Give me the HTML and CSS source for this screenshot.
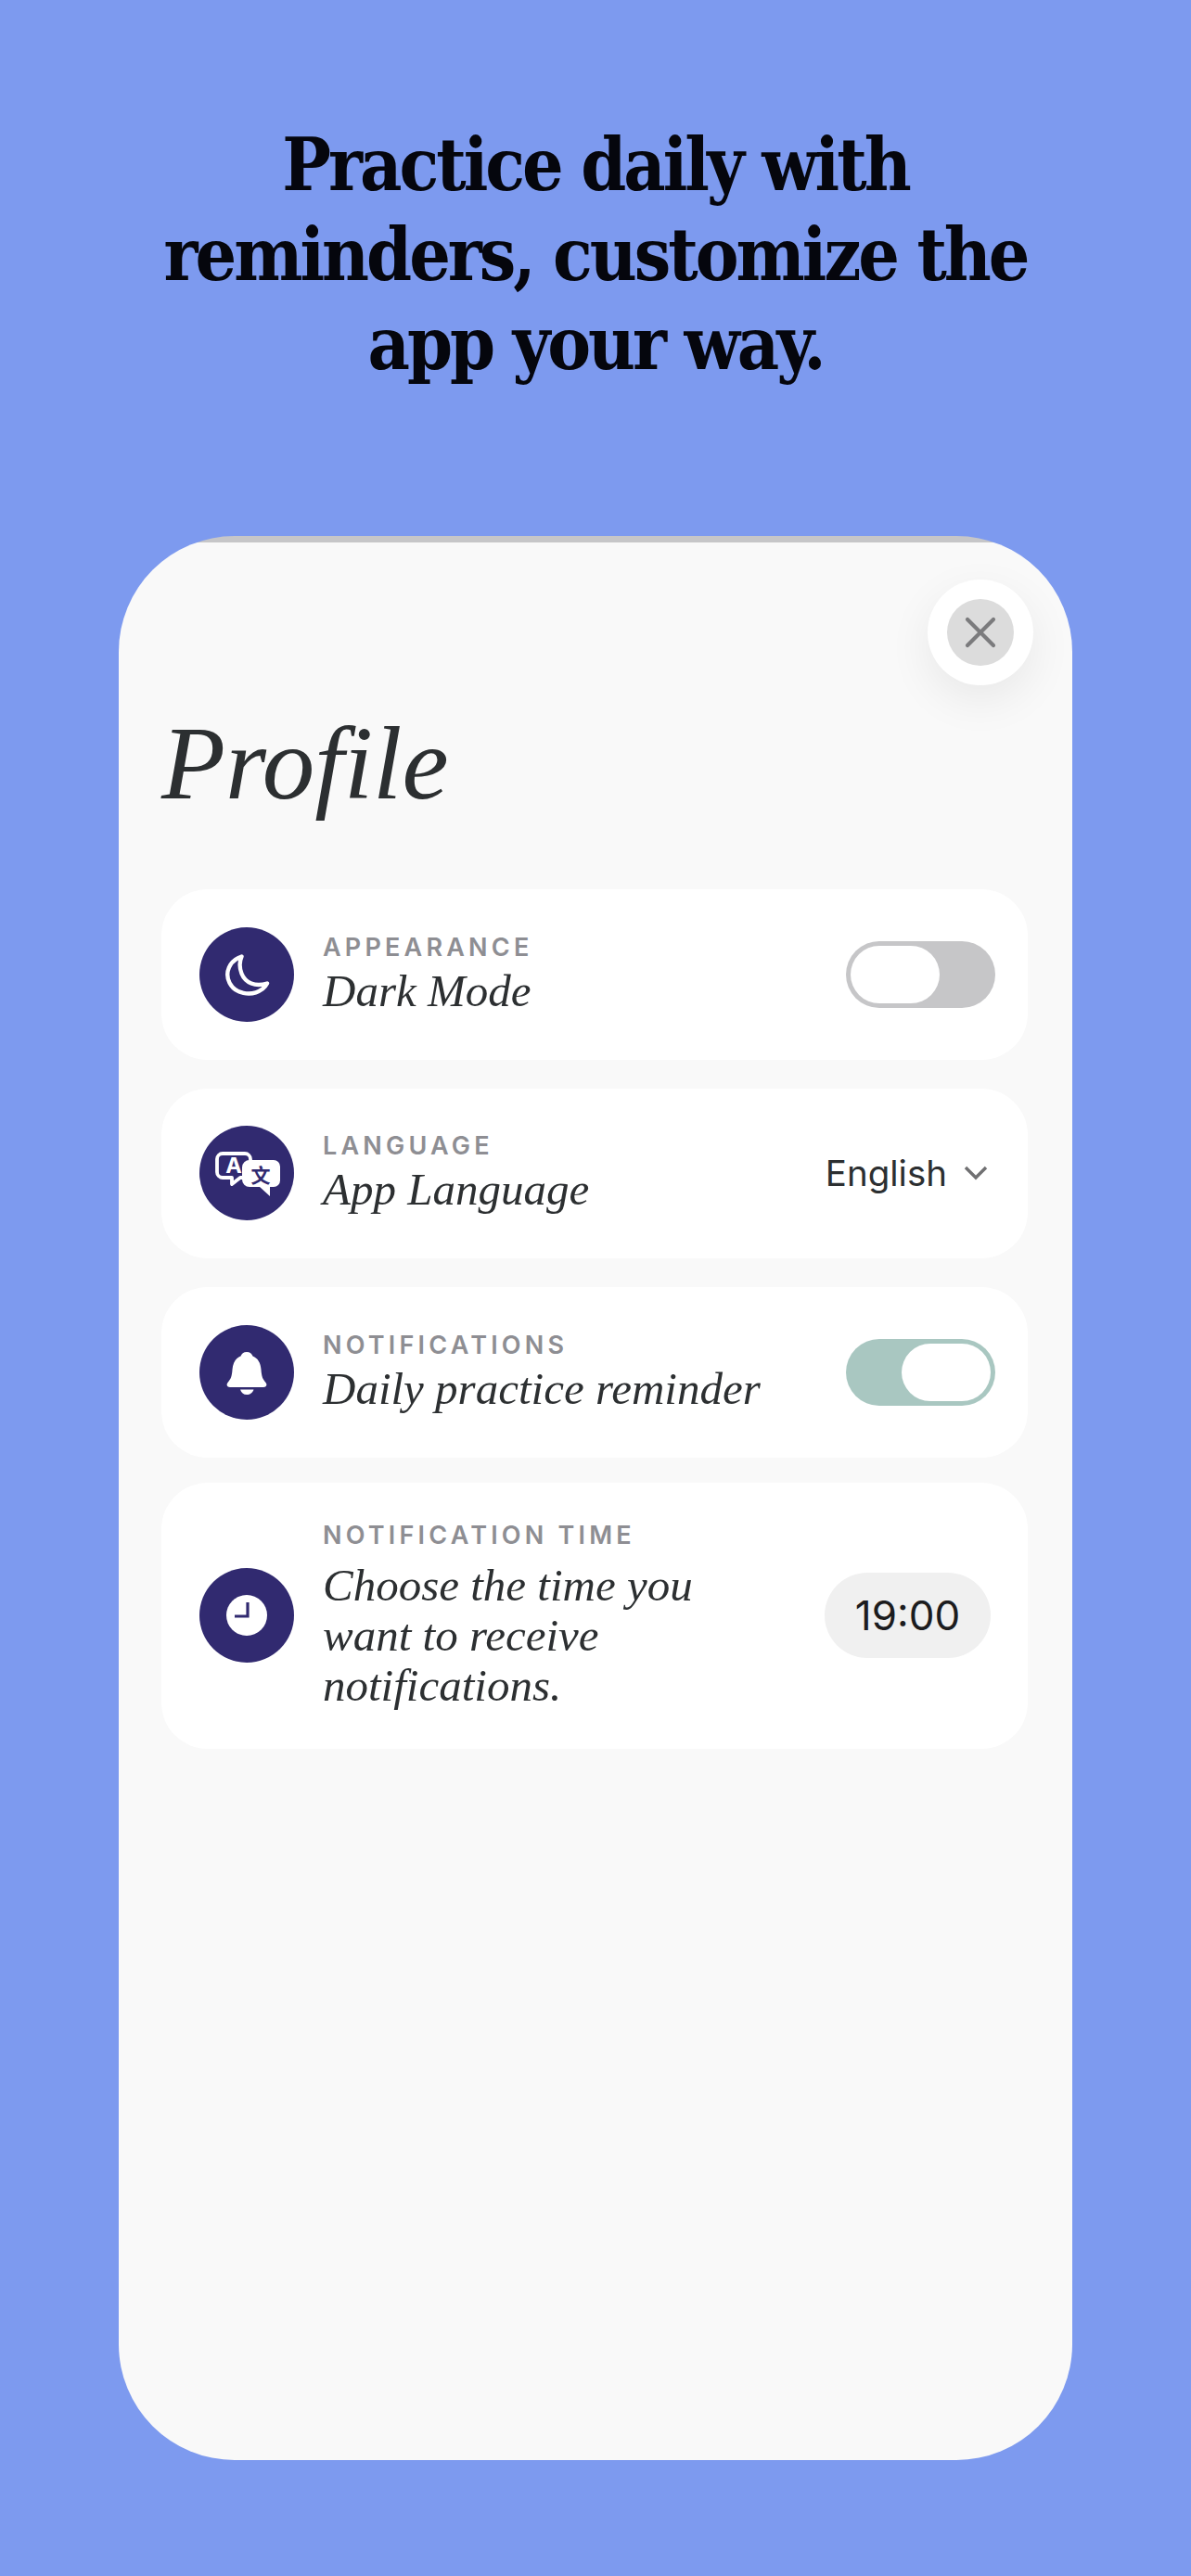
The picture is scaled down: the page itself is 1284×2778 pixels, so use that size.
FILE: index.html
```html
<!DOCTYPE html>
<html lang="en">
<head>
    <meta charset="UTF-8">
    <meta name="viewport" content="width=device-width, initial-scale=1.0">
    <title>Profile</title>
    <link rel="stylesheet" href="styles.css">
</head>
<body>
    <h1 class="headline">Practice daily with<br>reminders, customize the<br>app your way.</h1>

    <main class="sheet">
        <div class="close-row">
            <button class="close" aria-label="Close">
                <span class="close-inner">
                    <svg width="34" height="34" viewBox="0 0 34 34"><path d="M3 3 31 31M31 3 3 31" fill="none" stroke="#7b7b7d" stroke-width="4.200" stroke-linecap="round"/></svg>
                </span>
            </button>
        </div>

        <h2 class="title">Profile</h2>

        <section class="settings">
            <div class="card">
                <div class="icon">
                    <svg width="102" height="102" viewBox="0 0 102 102"><path d="M45.500 31.500C32 36 27 49 32.500 60C38 71 55 76 68 66.500C70.500 64.500 72 62.500 73 60.500C60 64.500 49.500 60 45.500 50C43 43.500 43 37 45.500 31.500Z" fill="none" stroke="#fff" stroke-width="4.400" stroke-linejoin="round"/></svg>
                </div>
                <div class="text">
                    <div class="label">APPEARANCE</div>
                    <div class="desc">Dark Mode</div>
                </div>
                <div class="toggle toggle-off"><span class="knob"></span></div>
            </div>

            <div class="card">
                <div class="icon">
                    <svg width="102" height="102" viewBox="0 0 102 102">
                        <path d="M25 30H49A6 6 0 0 1 55 36V50C55 54 53 56 49 56H44L35 63V56H25A6 6 0 0 1 19 50V36A6 6 0 0 1 25 30Z" fill="#312a70" stroke="#fff" stroke-width="3.800" stroke-linejoin="round"/>
                        <text class="glyph-a" x="37" y="51" text-anchor="middle">A</text>
                        <path d="M54 37H80A7 7 0 0 1 87 44V59A7 7 0 0 1 80 66H76V76L65 66H54A8 8 0 0 1 46 58V45A8 8 0 0 1 54 37Z" fill="#fff"/>
                        <text class="glyph-zh" x="66" y="61" text-anchor="middle">文</text>
                    </svg>
                </div>
                <div class="text">
                    <div class="label">LANGUAGE</div>
                    <div class="desc">App Language</div>
                </div>
                <div class="select">
                    <span>English</span>
                    <svg width="26" height="16" viewBox="0 0 26 16"><path d="M2 2 13 13 24 2" fill="none" stroke="#707072" stroke-width="3.400"/></svg>
                </div>
            </div>

            <div class="card">
                <div class="icon">
                    <svg width="102" height="102" viewBox="0 0 102 102"><path d="M51 29C54.500 29 56.500 31 57.500 33.500C63 35.500 66 41 66.500 48C67 55 68 58 71.500 62C73.500 64.500 72 67 69 67H33C30 67 28.500 64.500 30.500 62C34 58 35 55 35.500 48C36 41 39 35.500 44.500 33.500C45.500 31 47.500 29 51 29Z" fill="#fff"/><path d="M44 69.500H58.500C57.500 73 54.500 75 51 75C47.500 75 45 73 44 69.500Z" fill="#fff"/></svg>
                </div>
                <div class="text">
                    <div class="label">NOTIFICATIONS</div>
                    <div class="desc">Daily practice reminder</div>
                </div>
                <div class="toggle toggle-on"><span class="knob"></span></div>
            </div>

            <div class="card card-tall">
                <div class="icon">
                    <svg width="102" height="102" viewBox="0 0 102 102"><circle cx="51" cy="51" r="22" fill="#fff"/><path d="M52 37V52H38" fill="none" stroke="#312a70" stroke-width="3.200"/></svg>
                </div>
                <div class="text">
                    <div class="label">NOTIFICATION TIME</div>
                    <div class="desc">Choose the time you<br>want to receive<br>notifications.</div>
                </div>
                <div class="time">19:00</div>
            </div>
        </section>
    </main>
</body>
</html>
```

FILE: styles.css
```css
*, *::before, *::after {
    box-sizing: border-box;
}

body {
    margin: 0;
    height: 2778px;
    overflow: hidden;
    background-color: #7d9aef;
    display: flex;
    flex-direction: column;
    align-items: center;
}

.headline {
    margin: 0;
    padding-top: 130px;
    height: 578px;
    font: bold 78px/96.500px "DejaVu Serif Condensed", "DejaVu Serif", serif;
    letter-spacing: -3px;
    text-align: center;
    color: #05060d;
}

/* grey strip at the top is part of the background so the corners clip it flat */
.sheet {
    width: 1028px;
    height: 2075px;
    padding: 0 48px 0 46px;
    background: linear-gradient(#c6c6c8 7px, #f9f9f9 7px);
    border-radius: 125px;
    overflow: hidden;
}

.close-row {
    display: flex;
    justify-content: flex-end;
    padding-top: 47px;
    margin-right: -6px;
}

.close {
    display: flex;
    align-items: center;
    justify-content: center;
    width: 114px;
    height: 114px;
    padding: 0;
    border: none;
    border-radius: 50%;
    background-color: #fff;
    box-shadow: 0 16px 48px rgba(0, 0, 0, 0.07);
}

.close-inner {
    display: flex;
    align-items: center;
    justify-content: center;
    width: 72px;
    height: 72px;
    border-radius: 50%;
    background-color: #dcdcdc;
}

.title {
    margin: 9px 0 0;
    height: 211px;
    font: italic 400 113px/150px "Liberation Serif", serif;
    color: #2c2f31;
}

.settings {
    display: flex;
    flex-direction: column;
    gap: 31px;
}

.card {
    display: flex;
    align-items: center;
    height: 183.500px;
    padding: 0 40px 0 41px;
    background-color: #fff;
    border-radius: 50px;
}

.card-tall {
    height: 287px;
    margin-top: -4px;
}

.card-tall .label {
    margin-top: 1px;
}

.card-tall .desc {
    margin-top: 11px;
}

.icon {
    flex: none;
    width: 102px;
    height: 102px;
    margin-right: 31px;
    border-radius: 50%;
    background-color: #312a70;
}

.icon svg {
    display: block;
}

.glyph-a {
    font: 700 23.500px "Inter", sans-serif;
    fill: #fff;
}

.glyph-zh {
    font: 700 21px "Noto Sans CJK SC", sans-serif;
    fill: #312a70;
}

.text {
    flex: 1;
    min-width: 0;
}

.label {
    font: 600 27px/32px "Inter", sans-serif;
    letter-spacing: 4.200px;
    color: #8e8e93;
}

.desc {
    margin-top: 4px;
    font: italic 400 49px/54px "Liberation Serif", serif;
    color: #2c2f31;
}

.toggle {
    flex: none;
    display: flex;
    width: 161px;
    height: 72px;
    padding: 5px;
    margin-right: -5px;
    border-radius: 36px;
}

.toggle-off {
    justify-content: flex-start;
    background-color: #c6c6c8;
}

.toggle-on {
    justify-content: flex-end;
    background-color: #a9c7c1;
}

.knob {
    width: 96px;
    height: 62px;
    border-radius: 31px;
    background-color: #fff;
}

.select {
    display: flex;
    align-items: center;
    gap: 18px;
    margin-right: 3px;
    font: 400 38.500px "Inter", sans-serif;
    color: #2c2f31;
}

.time {
    flex: none;
    width: 179px;
    height: 92px;
    border-radius: 46px;
    background-color: #f0f0f0;
    font: 400 44px/92px "Inter", sans-serif;
    text-align: center;
    color: #1c1c1e;
}
```
